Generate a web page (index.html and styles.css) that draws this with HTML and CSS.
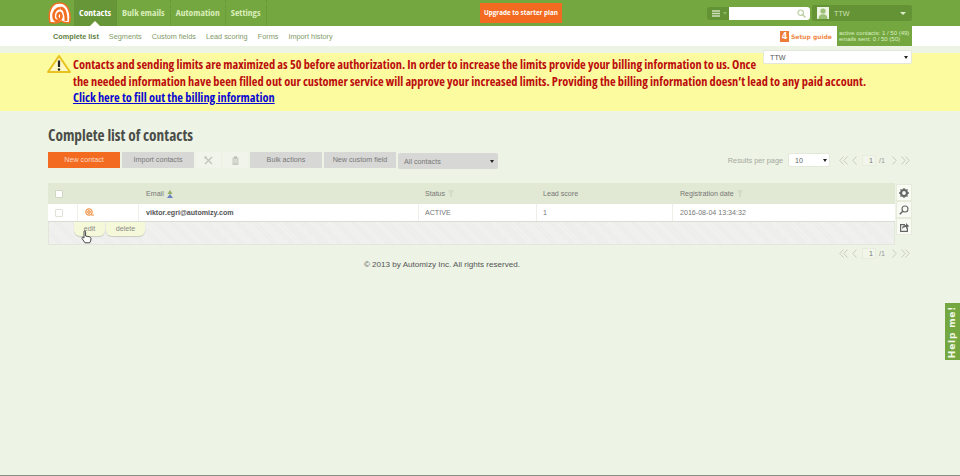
FILE: index.html
```html
<!DOCTYPE html>
<html lang="en">
<head>
<meta charset="utf-8">
<title>Complete list of contacts</title>
<link rel="stylesheet" href="styles.css">
</head>
<body>
<header class="topbar">
  <a class="logo" href="#"><svg width="23" height="22" viewBox="0 0 23 22"><path d="M2 20.500C-.5 10 3.500 1 11.500 1S23.500 10 21.500 20.500C18 21 15 20.500 13.500 19 11 21 5 21 2 20.500Z" fill="#fff" stroke="#f36f21" stroke-width="1.500"/><path d="M12.500 6C16.500 6 18 11 18 19" fill="none" stroke="#f36f21" stroke-width="2.800"/><path d="M12.500 6C8 6 5.500 10 5.500 14 5.500 18 8 19.500 10.500 18.500 13.500 17.500 14 14 13 12 12 10 9.500 11 9.500 14 9.500 15.500 10 16 11 15.500" fill="none" stroke="#f36f21" stroke-width="2.600"/></svg></a>
  <nav class="mainnav">
    <a class="mainnav-item is-active" href="#">Contacts</a>
    <a class="mainnav-item" href="#">Bulk emails</a>
    <a class="mainnav-item" href="#">Automation</a>
    <a class="mainnav-item" href="#">Settings</a>
  </nav>
  <a class="upgrade" href="#">Upgrade to starter plan</a>
  <div class="search">
    <span class="search-menu"><svg width="8" height="7" viewBox="0 0 8 7"><path d="M0 1h8M0 3.500h8M0 6h8" stroke="#cfdfbc" stroke-width="1.300"/></svg><i class="caret-mini"></i></span>
    <span class="search-box"><svg width="9" height="9" viewBox="0 0 9 9"><circle cx="3.700" cy="3.700" r="2.700" fill="none" stroke="#b9cfa0" stroke-width="1.200"/><path d="M5.700 5.700 8.500 8.500" stroke="#b9cfa0" stroke-width="1.400"/></svg></span>
  </div>
  <div class="user">
    <span class="avatar"><svg width="12" height="12" viewBox="0 0 12 12"><circle cx="6" cy="4" r="2.600" fill="#9dbf78"/><path d="M1.500 12c0-3.500 2-4.800 4.500-4.800s4.500 1.300 4.500 4.800z" fill="#9dbf78"/></svg></span>
    <span class="user-name">TTW</span>
    <i class="user-caret"></i>
  </div>
</header>

<div class="subbar">
  <nav class="subnav">
    <a class="subnav-item is-active" href="#">Complete list</a>
    <a class="subnav-item" href="#">Segments</a>
    <a class="subnav-item" href="#">Custom fields</a>
    <a class="subnav-item" href="#">Lead scoring</a>
    <a class="subnav-item" href="#">Forms</a>
    <a class="subnav-item" href="#">Import history</a>
  </nav>
  <a class="guide" href="#"><span class="guide-num">4</span>Setup guide</a>
  <div class="quota">active contacts: 1 / 50 (49)<br>emails sent: 0 / 50 (50)</div>
</div>

<div class="account-select"><span>TTW</span><i class="caret-dark"></i></div>

<section class="notice">
  <svg class="notice-icon" width="24" height="18" viewBox="0 0 24 18"><path d="M12 1 23 17H1Z" fill="#fff8c4" stroke="#e8c21e" stroke-width="2" stroke-linejoin="round"/><path d="M12 5.500v6.500" stroke="#222" stroke-width="2.200"/><circle cx="12" cy="14.500" r="1.200" fill="#222"/></svg>
  <p class="notice-text">Contacts and sending limits are maximized as 50 before authorization. In order to increase the limits provide your billing information to us. Once<br>the needed information have been filled out our customer service will approve your increased limits. Providing the billing information doesn’t lead to any paid account.<br><a href="#">Click here to fill out the billing information</a></p>
</section>

<main class="page">
  <h1 class="title">Complete list of contacts</h1>

  <div class="toolbar">
    <a class="btn btn-primary" href="#">New contact</a>
    <a class="btn" href="#">Import contacts</a>
    <span class="tool"><svg width="9" height="9" viewBox="0 0 9 9"><path d="M1 1l7 7M8 1 1 8" stroke="#c2c5bb" stroke-width="1.400"/><circle cx="1.500" cy="1.500" r="1.200" fill="#c2c5bb"/></svg></span>
    <span class="tool"><svg width="7" height="9" viewBox="0 0 7 9"><path d="M.5 1.500h6V9h-6z" fill="#c9ccc2"/><path d="M2 .5h3V2H2z" fill="#b5b8ae"/><path d="M1.500 4h4M1.500 6h4" stroke="#e6e9de"/></svg></span>
    <a class="btn" href="#">Bulk actions</a>
    <a class="btn" href="#">New custom field</a>
    <div class="btn-select"><span>All contacts</span><i class="caret-dark"></i></div>
    <div class="results">
      <span class="results-label">Results per page</span>
      <div class="per-page"><span>10</span><i class="caret-dark"></i></div>
      <div class="pager">
        <svg class="chev" width="9" height="9" viewBox="0 0 9 9"><path d="M4.500 .5 .8 4.500 4.500 8.500M8.500 .5 4.800 4.500 8.500 8.500"/></svg>
        <svg class="chev chev-prev" width="5" height="9" viewBox="0 0 5 9"><path d="M4.500 .5 .8 4.500 4.500 8.500"/></svg>
        <span class="page-no">1</span><span class="page-total">/1</span>
        <svg class="chev chev-next" width="5" height="9" viewBox="0 0 5 9"><path d="M.5 .5 4.200 4.500 .5 8.500"/></svg>
        <svg class="chev" width="9" height="9" viewBox="0 0 9 9"><path d="M.5 .5 4.200 4.500 .5 8.500M4.500 .5 8.200 4.500 4.500 8.500"/></svg>
      </div>
    </div>
  </div>

  <div class="table-area">
    <div class="table-wrap">
      <div class="t-row t-head">
        <div class="c c-check"><i class="check check-head"></i></div>
        <div class="c c-icon"></div>
        <div class="c c-email">Email <svg width="6" height="8" viewBox="0 0 6 8"><path d="M3 0 5.500 4H.5Z" fill="#8fae62"/><path d="M3 4 6 8H0Z" fill="#6b7fc4"/></svg></div>
        <div class="c c-status">Status <svg width="6" height="7" viewBox="0 0 6 7"><path d="M0 0h6L4 3.500V7H2V3.500Z" fill="#d3dcc6"/></svg></div>
        <div class="c c-score">Lead score</div>
        <div class="c c-date">Registration date <svg width="6" height="7" viewBox="0 0 6 7"><path d="M0 0h6L4 3.500V7H2V3.500Z" fill="#d3dcc6"/></svg></div>
      </div>
      <div class="t-row t-body">
        <div class="c c-check"><i class="check"></i></div>
        <div class="c c-icon"><svg width="9" height="9" viewBox="0 0 9 9"><circle cx="4" cy="4" r="3.300" fill="#fbe6d2" stroke="#ee8a3c"/><circle cx="4" cy="4" r="1.300" fill="none" stroke="#ee8a3c"/><path d="M6 7h3" stroke="#ee8a3c"/></svg></div>
        <div class="c c-email c-strong">viktor.egri@automizy.com</div>
        <div class="c c-status">ACTIVE</div>
        <div class="c c-score">1</div>
        <div class="c c-date">2016-08-04 13:34:32</div>
      </div>
      <div class="t-extra">
        <div class="row-actions">
          <a class="row-action row-edit" href="#">edit</a>
          <a class="row-action row-delete" href="#">delete</a>
        </div>
        <svg class="cursor" width="11" height="14" viewBox="0 0 11 14"><path d="M3 1.200c.8-.6 1.600 0 1.600.8v4l3.400.7c1.400.3 2 1 2 2 0 1.700-.5 3-1.300 4.100H4L1 8.500c-.4-.8.500-1.500 1.300-1l.7.600Z" fill="#fff" stroke="#333" stroke-width=".9"/></svg>
      </div>
    </div>
    <div class="side-tools">
      <span class="side-btn"><svg width="10" height="10" viewBox="0 0 10 10"><circle cx="5" cy="5" r="2.900" fill="none" stroke="#666" stroke-width="2"/><path d="M5 0v2M5 8v2M0 5h2M8 5h2M1.500 1.500 3 3M7 7l1.500 1.500M8.500 1.500 7 3M3 7 1.500 8.500" stroke="#666" stroke-width="1.300"/></svg></span>
      <span class="side-btn"><svg width="10" height="10" viewBox="0 0 10 10"><circle cx="6" cy="4" r="3" fill="none" stroke="#666" stroke-width="1.100"/><path d="M3.800 6.200 .8 9.200" stroke="#666" stroke-width="1.500"/></svg></span>
      <span class="side-btn"><svg width="10" height="10" viewBox="0 0 10 10"><path d="M1 2h5v1.200H2.200v5.600h5.600V6H9v4H1Z" fill="#666"/><path d="M3 7c0-2.500 1.500-4 4-4V1l3 3-3 3V5C5 5 4 5.800 3 7Z" fill="#666"/></svg></span>
    </div>
  </div>

  <div class="pager pager-bottom">
    <svg class="chev" width="9" height="9" viewBox="0 0 9 9"><path d="M4.500 .5 .8 4.500 4.500 8.500M8.500 .5 4.800 4.500 8.500 8.500"/></svg>
    <svg class="chev chev-prev" width="5" height="9" viewBox="0 0 5 9"><path d="M4.500 .5 .8 4.500 4.500 8.500"/></svg>
    <span class="page-no">1</span><span class="page-total">/1</span>
    <svg class="chev chev-next" width="5" height="9" viewBox="0 0 5 9"><path d="M.5 .5 4.200 4.500 .5 8.500"/></svg>
    <svg class="chev" width="9" height="9" viewBox="0 0 9 9"><path d="M.5 .5 4.200 4.500 .5 8.500M4.500 .5 8.200 4.500 4.500 8.500"/></svg>
  </div>

  <footer class="copyright">© 2013 by Automizy Inc. All rights reserved.</footer>
</main>

<a class="help" href="#"><span>Help me!</span></a>
</body>
</html>
```

FILE: styles.css
```css
* { box-sizing: border-box; }
html, body { margin: 0; height: 476px; overflow: hidden; }
body {
  background: #edf3e5;
  font-family: "Liberation Sans", Arial, sans-serif;
  font-size: 8px;
  color: #666;
  position: relative;
  border-bottom: 1px solid #8b8d87;
}
a { color: inherit; text-decoration: none; }
i { display: block; }

.topbar {
  height: 26px;
  background: #74a740;
  display: flex;
  align-items: center;
  padding-left: 48px;
}
.logo { width: 23px; height: 22px; display: block; margin-right: 3px; }
.logo svg { display: block; }
.mainnav { display: flex; height: 26px; width: 406px; }
.mainnav-item {
  height: 26px;
  line-height: 25px;
  padding: 0 5px;
  font-family: "Open Sans", sans-serif;
  font-stretch: 75%;
  font-weight: 700;
  font-size: 9.600px;
  color: #d9edb9;
  border-right: 1px dotted #639335;
  white-space: nowrap;
}
.mainnav-item.is-active {
  background: #669637;
  color: #fff;
  position: relative;
  width: 43px;
}
.mainnav-item.is-active::after {
  content: "";
  position: absolute;
  left: 16px;
  bottom: 0;
  border: 5px solid transparent;
  border-top: 0;
  border-bottom-color: #fff;
}
.upgrade {
  width: 82px;
  height: 20px;
  line-height: 20px;
  background: #f36b21;
  color: #fff;
  font-family: "Open Sans", sans-serif;
  font-weight: 700;
  font-size: 6.300px;
  text-align: center;
  white-space: nowrap;
}
.search { display: flex; margin-left: 145px; height: 13px; }
.search-menu {
  width: 22px;
  background: #639335;
  border-radius: 3px 0 0 3px;
  display: flex;
  align-items: center;
  padding-left: 5px;
  gap: 3px;
}
.caret-mini { border: 2px solid transparent; border-top: 3px solid #8db564; border-bottom: 0; }
.search-box {
  width: 81px;
  background: #fff;
  border-radius: 0 3px 3px 0;
  display: flex;
  align-items: center;
  justify-content: flex-end;
  padding-right: 4px;
}
.user {
  width: 100px;
  height: 16px;
  margin-left: 2px;
  background: #639335;
  border-radius: 2px;
  display: flex;
  align-items: center;
  padding: 0 6px 0 5px;
}
.avatar { width: 12px; height: 12px; background: #eef5e3; display: block; }
.avatar svg { display: block; }
.user-name { margin-left: 5px; font-size: 7.200px; color: #cfe2b2; }
.user-caret { margin-left: auto; border: 3px solid transparent; border-top: 3px solid #dfeccb; border-bottom: 0; }

.subbar {
  height: 20px;
  background: #fff;
  display: flex;
  align-items: flex-start;
  padding-left: 53px;
}
.subnav { display: flex; gap: 10px; height: 20px; align-items: center; width: 727px; }
.subnav-item { font-size: 7.300px; color: #7f9a68; white-space: nowrap; }
.subnav-item.is-active { font-weight: 700; color: #5f7f3f; }
.guide {
  display: flex;
  align-items: center;
  height: 20px;
  width: 57px;
  font-family: "DejaVu Sans", sans-serif;
  font-weight: 700;
  font-size: 6px;
  color: #f08a4a;
  white-space: nowrap;
}
.guide-num {
  width: 9px;
  height: 11px;
  line-height: 11px;
  background: #ef7d3a;
  color: #fff;
  font-size: 8px;
  text-align: center;
  margin-right: 2px;
  flex: none;
}
.quota {
  width: 75px;
  height: 20px;
  background: #74a740;
  color: #dcefc0;
  font-size: 6px;
  line-height: 6.600px;
  padding: 3.500px 0 0 2px;
  white-space: nowrap;
}

.account-select {
  position: absolute;
  left: 763px;
  top: 50px;
  width: 149px;
  height: 14px;
  background: #fff;
  border: 1px solid #e4e8da;
  border-radius: 2px;
  display: flex;
  align-items: center;
  justify-content: space-between;
  padding: 0 3px 0 6px;
  font-size: 7.200px;
  color: #555;
}
.caret-dark { border: 2px solid transparent; border-top: 3px solid #222; border-bottom: 0; }

.notice {
  margin-top: 7px;
  height: 58px;
  background: #fdfb9f;
  display: flex;
  padding: 4px 0 0 47px;
}
.notice-icon { flex: none; margin: -2px 2px 0 0; }
.notice-text {
  margin: 0;
  font-family: "Open Sans", sans-serif;
  font-stretch: 75%;
  font-weight: 700;
  font-size: 12.350px;
  line-height: 16.500px;
  color: #bb0d0d;
  white-space: nowrap;
}
.notice-text a { color: #0a0ad0; text-decoration: underline; }

.page { padding: 0 48px; position: relative; }
.title {
  margin: 15px 0 0;
  height: 19px;
  line-height: 19px;
  font-family: "Open Sans", sans-serif;
  font-stretch: 75%;
  font-weight: 700;
  font-size: 15.350px;
  color: #4a4d48;
}
.toolbar { display: flex; align-items: flex-start; margin-top: 7px; height: 31px; }
.btn {
  width: 72px;
  height: 16px;
  line-height: 16px;
  background: #d7d8d6;
  color: #777;
  font-size: 7.200px;
  text-align: center;
  margin-right: 2px;
  flex: none;
}
.btn-primary { background: #f36b21; color: #fbd9c4; }
.tool {
  width: 25px;
  height: 16px;
  display: flex;
  align-items: center;
  justify-content: center;
  margin-right: 2px;
  background: #f1f4ea;
}
.btn-select {
  width: 100px;
  height: 16px;
  margin-top: 1px;
  background: #d7d8d6;
  color: #777;
  font-size: 7.200px;
  display: flex;
  align-items: center;
  justify-content: space-between;
  padding: 0 4px 0 6px;
  border-radius: 2px;
}
.results { margin-left: auto; display: flex; align-items: center; height: 16px; }
.results-label { font-size: 7.300px; color: #a5a89f; margin-right: 5px; }
.per-page {
  width: 42px;
  height: 14px;
  background: #fff;
  border: 1px solid #e4e8da;
  border-radius: 2px;
  display: flex;
  align-items: center;
  justify-content: space-between;
  padding: 0 2px 0 6px;
  font-size: 7.200px;
  color: #666;
  margin-right: 9px;
}
.pager { display: flex; align-items: center; height: 11px; padding-right: 2px; }
.chev { fill: none; stroke: #c6cabd; stroke-width: .9; flex: none; }
.chev-prev { margin: 0 5px 0 4px; }
.chev-next { margin: 0 4px 0 6px; }
.page-no {
  width: 14px;
  height: 11px;
  line-height: 10px;
  background: #f1f5ea;
  border: 1px solid #e7ecde;
  font-size: 7.200px;
  color: #777;
  text-align: right;
  padding-right: 2px;
}
.page-total { font-size: 7.200px; color: #999; margin-left: 3px; width: 7px; }

.table-area { display: flex; align-items: flex-start; gap: 1px; }
.table-wrap { width: 847px; flex: none; }
.t-row { display: flex; }
.t-head { height: 21px; background: #e1e8d3; color: #777; }
.t-body { height: 18px; background: #fff; color: #777; border-bottom: 1px solid #d9dcd2; }
.c { display: flex; align-items: center; padding-left: 7px; font-size: 7.100px; gap: 3px; white-space: nowrap; }
.t-body .c { border-right: 1px solid #eef0e8; }
.t-body .c-date { border-right: 0; }
.c-check { width: 30px; }
.c-icon { width: 61px; }
.c-email { width: 280px; }
.c-status { width: 118px; padding-left: 6px; }
.c-score { width: 136px; padding-left: 6px; }
.c-date { width: 222px; }
.c-strong { font-weight: 700; color: #555; }
.check { width: 8px; height: 8px; background: #fff; border: 1px solid #dfe2d8; border-radius: 1px; }
.check-head { border-color: #cfd6c2; }
.t-extra {
  height: 23px;
  background: repeating-linear-gradient(45deg, #f2f3f0 0 1px, #ecedea 1px 2px);
  border: 1px solid #e3e6dc;
  border-top: 0;
  position: relative;
}
.row-actions { position: absolute; left: 25px; top: 0; display: flex; gap: 1px; }
.row-action {
  height: 14px;
  line-height: 13px;
  background: #f6f9d9;
  color: #888;
  font-size: 7.200px;
  text-align: center;
  border-radius: 0 0 6px 6px;
  box-shadow: 0 1px 1px #c9ccc0;
}
.row-edit { width: 31px; }
.row-delete { width: 39px; }
.cursor { position: absolute; left: 32px; top: 8px; }
.side-tools { display: flex; flex-direction: column; width: 16px; margin-top: 1px; }
.side-btn {
  height: 17px;
  background: #f8faf4;
  border: 1px solid #e6ebdc;
  display: flex;
  align-items: center;
  justify-content: center;
}
.pager-bottom { justify-content: flex-end; margin-top: 3px; }
.copyright { padding: 1px 76px 0 0; text-align: center; font-size: 8.100px; color: #555; }

.help {
  position: absolute;
  right: 0;
  top: 303px;
  width: 15px;
  height: 57px;
  background: #74a740;
  display: flex;
  align-items: center;
  justify-content: center;
}
.help span {
  display: block;
  transform: rotate(-90deg);
  font-family: "DejaVu Sans", sans-serif;
  font-weight: 700;
  font-size: 9px;
  letter-spacing: .8px;
  color: #f2f7e8;
  white-space: nowrap;
}
```
